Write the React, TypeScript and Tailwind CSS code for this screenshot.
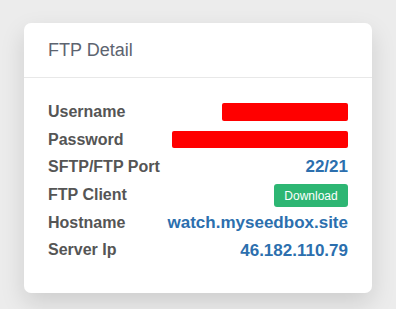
export default function App() {
  const rows: { label: string; value: React.ReactNode }[] = [
    { label: 'Username', value: <span className="block w-[126px] h-[18px] bg-[#ff0000] rounded-[2px]" /> },
    { label: 'Password', value: <span className="block w-[176px] h-[17px] bg-[#ff0000] rounded-[2px]" /> },
    { label: 'SFTP/FTP Port', value: '22/21' },
    {
      label: 'FTP Client',
      value: (
        <button className="h-[23px] w-[74px] rounded-[3px] bg-[#2db673] text-white text-[12px] leading-none mt-[2px]">
          Download
        </button>
      ),
    },
    { label: 'Hostname', value: 'watch.myseedbox.site' },
    { label: 'Server Ip', value: '46.182.110.79' },
  ];

  return (
    <div className="min-h-[309px] bg-[#ececec] pt-[23px] px-[24px] font-['Liberation_Sans',Arial,sans-serif]">
      <div className="w-[348px] h-[270px] bg-white rounded-[7px] shadow-[0_10px_24px_rgba(0,0,0,0.13)]">
        <div className="h-[55px] px-[24px] flex items-center text-[18px] text-[#5d6470] border-b border-[#e8e8e8]">
          FTP Detail
        </div>
        <div className="px-[24px] pt-[20px]">
          {rows.map((r) => (
            <div key={r.label} className="h-[27.7px] flex items-center justify-between">
              <span className="text-[16px] font-bold text-[#555555]">{r.label}</span>
              {typeof r.value === 'string' ? (
                <span className="text-[17px] font-bold text-[#2c6fae]">{r.value}</span>
              ) : (
                r.value
              )}
            </div>
          ))}
        </div>
      </div>
    </div>
  );
}
